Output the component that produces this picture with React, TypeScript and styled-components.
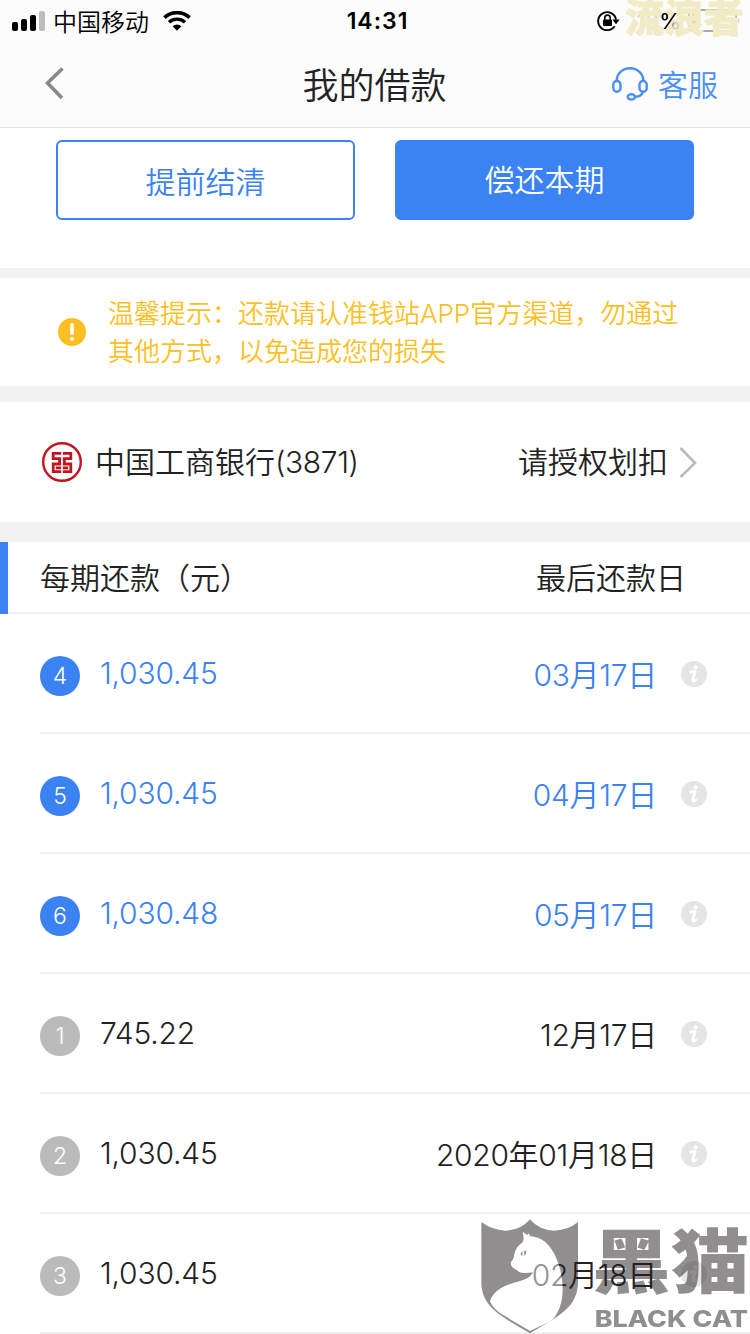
import styled, { createGlobalStyle } from "styled-components";

const GlobalStyle = createGlobalStyle`
    * {
        box-sizing: border-box;
    }

    body {
        margin: 0;
        background-color: #F2F2F2;
        color: #222222;
        font-family: Inter, "Noto Sans CJK SC", sans-serif;
        font-weight: 350;
    }
`;

const Page = styled.main`
    position: relative;
    width: 750px;
    height: 1334px;
    overflow: hidden;
`;

const TopBar = styled.header`
    height: 128px;
    background-color: #FCFCFC;
    border-bottom: 1px solid #E3E3E3;
`;

const StatusBar = styled.div`
    display: grid;
    grid-template-columns: 1fr auto 1fr;
    align-items: center;
    height: 40px;
    padding: 0 9px 0 12px;
    color: #000000;
`;

const StatusGroup = styled.div<{ $end?: boolean }>`
    display: flex;
    align-items: center;
    justify-content: ${({ $end }) => ($end ? "flex-end" : "flex-start")};
`;

const Carrier = styled.span`
    font-size: 24px;
    line-height: 37px;
    padding-top: 3px;
    margin: 0 14px 0 8px;
`;

const Clock = styled.span`
    font-size: 23px;
    line-height: 40px;
    font-weight: 600;
    letter-spacing: 1px;
    padding: 1px 0 0 2px;
`;

const Percent = styled.span`
    font-size: 22px;
    line-height: 40px;
    font-weight: 500;
    margin: 0 7px 0 16px;
`;

const Faded = styled.span`
    color: #D5D5D5;
`;

const PercentSign = styled.span`
    position: relative;
    z-index: 1;
    background-image: linear-gradient(115deg, #000000 58%, #CFCDBE 66%);
    background-clip: text;
    color: transparent;
`;

const NavBar = styled.nav`
    display: grid;
    grid-template-columns: 1fr auto 1fr;
    align-items: center;
    height: 87px;
    padding: 0 32px 0 44px;
`;

const Title = styled.h1`
    margin: 0;
    font-size: 36px;
    line-height: 52px;
    font-weight: 350;
    padding: 5px 13px 0 0;
`;

const Service = styled.a`
    display: flex;
    align-items: center;
    justify-content: flex-end;
    gap: 10px;
    color: #4A8FF7;
    font-size: 30px;
    line-height: 44px;
`;

const ServiceLabel = styled.span`
    padding-top: 2px;
`;

const Actions = styled.section`
    display: flex;
    gap: 40px;
    height: 140px;
    padding: 12px 56px 0;
    background-color: #FFFFFF;
`;

const Button = styled.button<{ $primary?: boolean }>`
    flex: 1;
    height: 80px;
    border: 2px solid #3B82F3;
    border-radius: 6px;
    padding: ${({ $primary }) => ($primary ? "0 0 4px" : "0")};
    background-color: ${({ $primary }) => ($primary ? "#3B82F3" : "#FFFFFF")};
    color: ${({ $primary }) => ($primary ? "#FFFFFF" : "#3B82F3")};
    font-family: inherit;
    font-size: 30px;
    font-weight: inherit;
`;

const Notice = styled.section`
    display: flex;
    align-items: center;
    gap: 22px;
    height: 108px;
    margin-top: 10px;
    padding-left: 58px;
    background-color: #FFFFFF;
    color: #FCBF23;
`;

const NoticeText = styled.p`
    margin: 0;
    padding-bottom: 3px;
    font-family: "Noto Sans CJK SC", sans-serif;
    font-size: 26px;
    line-height: 38px;
    white-space: nowrap;
`;

const Latin = styled.span`
    font-family: Inter, sans-serif;
    font-weight: 300;
    line-height: 1;
`;

const BankRow = styled.section`
    display: flex;
    align-items: center;
    height: 120px;
    margin-top: 16px;
    padding: 0 53px 0 41px;
    background-color: #FFFFFF;
    font-size: 30px;
    line-height: 44px;
`;

const BankName = styled.span`
    flex: 1;
    margin-left: 12px;
    padding-bottom: 1px;
`;

const CardNumber = styled.span`
    font-weight: 300;
    letter-spacing: -0.4px;
`;

const Authorize = styled.span`
    margin-right: 11px;
    padding-bottom: 1px;
`;

const TableHead = styled.header`
    display: flex;
    justify-content: space-between;
    align-items: center;
    height: 72px;
    margin-top: 20px;
    padding: 0 64px 4px 32px;
    border-left: 8px solid #3B82F3;
    background-color: #FFFFFF;
    box-shadow: inset 0 -2px 0 #F0F0F0;
    font-family: "Noto Sans CJK SC", sans-serif;
    font-size: 30px;
    line-height: 44px;
`;

const List = styled.ul`
    margin: 0;
    padding: 0 0 0 40px;
    list-style: none;
    background-color: #FFFFFF;
`;

const Row = styled.li<{ $active: boolean }>`
    display: flex;
    align-items: center;
    height: 120px;
    padding-right: 43px;
    border-bottom: 2px solid #F0F0F0;
    color: ${({ $active }) => ($active ? "#3B82F3" : "#222222")};
    font-size: 30px;
    line-height: 44px;

    svg {
        margin-top: 2px;
    }
`;

const Badge = styled.span<{ $active: boolean }>`
    width: 40px;
    height: 40px;
    margin-top: 6px;
    border-radius: 50%;
    background-color: ${({ $active }) => ($active ? "#3B82F3" : "#BBBBBB")};
    color: #FFFFFF;
    font-size: 23px;
    font-weight: 300;
    line-height: 40px;
    text-align: center;
`;

const Amount = styled.span`
    flex: 1;
    margin-left: 20px;
    font-weight: 300;
    letter-spacing: -0.2px;
`;

const DueDate = styled.span`
    margin: 3px 24px 0 0;
    font-weight: 330;
    letter-spacing: -0.3px;
`;

const NameMark = styled.div`
    position: absolute;
    top: -10px;
    left: 625px;
    font-size: 39.5px;
    line-height: 57px;
    font-weight: 900;
    color: #F1ECC6;
    -webkit-text-stroke: 0.8px #F1ECC6;
    white-space: nowrap;
`;

const CatMark = styled.svg`
    position: absolute;
    right: 0;
    bottom: 0;
    opacity: 0.5;
`;

const SignalIcon = () => (
    <svg width="33" height="20" viewBox="0 0 33 20">
        <rect x="0" y="11" width="6" height="9" rx="2" />
        <rect x="9" y="8" width="6" height="12" rx="2" />
        <rect x="18" y="4" width="6" height="16" rx="2" />
        <rect x="27" y="0" width="6" height="20" rx="2" fill="#BDBDBD" />
    </svg>
);

const WifiIcon = () => (
    <svg width="28" height="20" viewBox="0 0 28 20">
        <path d="M1.4 6.6a18.5 18.5 0 0 1 25.2 0" fill="none" stroke="#000" strokeWidth="3.6" />
        <path d="M6 11.2a12 12 0 0 1 16 0" fill="none" stroke="#000" strokeWidth="3.4" />
        <path d="M9.6 15.3a6.6 6.6 0 0 1 8.8 0L14 19.8z" />
    </svg>
);

const RotationLockIcon = () => (
    <svg width="23" height="22" viewBox="0 0 23 22">
        <path d="M17.6 16.2A9 9 0 1 1 19 9.5" fill="none" stroke="#000" strokeWidth="1.9" />
        <path d="M15.4 9.5h7.2l-3.6 4.8z" />
        <rect x="6" y="9.5" width="9" height="6.6" rx="1" />
        <path d="M7.8 10V7.8a2.7 2.7 0 0 1 5.4 0V10" fill="none" stroke="#000" strokeWidth="1.6" />
    </svg>
);

const BatteryIcon = () => (
    <svg width="53" height="24" viewBox="0 0 53 24">
        <rect x="1" y="1" width="47" height="21" rx="5" fill="none" stroke="#A8A8A8" strokeWidth="1.8" />
        <rect x="4" y="4" width="8" height="15" rx="2" fill="#FFB5B0" />
        <path d="M50 8q3 3.5 0 7z" fill="#DDDDDD" />
    </svg>
);

const BackIcon = () => (
    <svg width="22" height="34" viewBox="0 0 22 34">
        <path d="M18.5 1.5 3.5 16l14.5 15" fill="none" stroke="#888888" strokeWidth="3.6" />
    </svg>
);

const HeadsetIcon = () => (
    <svg width="36" height="34" viewBox="0 0 36 34" fill="none" stroke="#4A8FF7" strokeWidth="2.4">
        <path d="M4.7 14V13.5a13.3 12.3 0 0 1 26.6 0V14" />
        <rect x="1.3" y="14" width="7.2" height="10.8" rx="3.5" />
        <rect x="27.5" y="14" width="7.2" height="10.8" rx="3.5" />
        <path d="M31 24.8c-1 3-3.600 4.900-8 5" />
        <ellipse cx="19.3" cy="29.9" rx="3.6" ry="2.6" />
    </svg>
);

const WarnIcon = () => (
    <svg width="28" height="28" viewBox="0 0 28 28">
        <circle cx="14" cy="14" r="14" fill="#FCBF23" />
        <path d="M14 7v8" stroke="#FFF" strokeWidth="3.8" strokeLinecap="round" />
        <circle cx="14" cy="21" r="2" fill="#FFF" />
    </svg>
);

const BankIcon = () => (
    <svg width="42" height="42" viewBox="0 0 42 42" fill="none" stroke="#C2151F">
        <circle cx="21" cy="21" r="18.8" strokeWidth="2.4" />
        <g strokeWidth="2.8">
            <path d="M20.2 12.4h-8v5.2h8M20.2 23h-8v7.6h8" />
            <path d="M21.8 12.4h8v5.2h-8M21.8 23h8v7.6h-8" />
            <path d="M18.6 17v6M23.4 17v6M14.8 26.8h5.4M21.8 26.8h5.4" />
        </g>
    </svg>
);

const ArrowIcon = () => (
    <svg width="18" height="32" viewBox="0 0 18 32">
        <path d="M1.5 2 16 17 1.5 31" fill="none" stroke="#BBBBBB" strokeWidth="2.6" />
    </svg>
);

const InfoIcon = () => (
    <svg width="26" height="26" viewBox="0 0 26 26">
        <circle cx="13" cy="13" r="13" fill="#E5E5E5" />
        <circle cx="14.6" cy="6.3" r="2.1" fill="#FFF" />
        <path d="M8.8 11.6c2-.9 4-1.2 5.2-1l-2.3 8.4c-.2 1.2 1.5 1 4.2-.5" fill="none" stroke="#FFF" strokeWidth="2.8" />
    </svg>
);

const BlackCat = () => (
    <CatMark width="280" height="124" viewBox="0 0 840 372" fill="#231F20">
        <path d="M34 36Q66 60 107 62 152 61 180 28 208 61 253 62 295 60 324 36V214C324 292 270 316 180 370 90 316 34 292 34 214Z" />
        <g transform="translate(24 15)">
            <path
                d="M134 50 148 61 150 54 158 64C185 66 205 80 220 102 242 134 254 180 254 222 254 262 242 298 218 319L156 348 82 304C56 290 42 274 36 258 46 234 62 221 86 211 112 200 134 198 150 188 158 184 162 178 165 172 150 174 136 176 122 170 116 162 98 160 98 144 100 138 106 136 108 124 110 106 118 94 130 85 138 78 138 70 134 50Z"
                fill="#FFF"
            />
            <path d="M128 115l6-6-1 14q-5-1-5-8zM138 108l7-1q1 10-7 16 3-8 0-15z" />
        </g>
        <text x="366" y="234" fontSize="212" fontWeight="900" fontFamily="Noto Sans CJK SC" textLength="472" lengthAdjust="spacingAndGlyphs">黑猫</text>
        <text x="374" y="350" fontSize="68" fontWeight="800" fontFamily="Inter" textLength="460" lengthAdjust="spacingAndGlyphs">BLACK CAT</text>
    </CatMark>
);

interface IInstallment {
    period: number;
    amount: string;
    date: string;
    active: boolean;
}

const installments: IInstallment[] = [
    { period: 4, amount: "1,030.45", date: "03月17日", active: true },
    { period: 5, amount: "1,030.45", date: "04月17日", active: true },
    { period: 6, amount: "1,030.48", date: "05月17日", active: true },
    { period: 1, amount: "745.22", date: "12月17日", active: false },
    { period: 2, amount: "1,030.45", date: "2020年01月18日", active: false },
    { period: 3, amount: "1,030.45", date: "02月18日", active: false },
];

function Installment({ period, amount, date, active }: IInstallment) {
    return (
        <Row $active={active}>
            <Badge $active={active}>{period}</Badge>
            <Amount>{amount}</Amount>
            <DueDate>{date}</DueDate>
            <InfoIcon />
        </Row>
    );
}

function App() {
    return (
        <Page>
            <GlobalStyle />
            <TopBar>
                <StatusBar>
                    <StatusGroup>
                        <SignalIcon />
                        <Carrier>中国移动</Carrier>
                        <WifiIcon />
                    </StatusGroup>
                    <Clock>14:31</Clock>
                    <StatusGroup $end>
                        <RotationLockIcon />
                        <Percent><Faded>18</Faded><PercentSign>%</PercentSign></Percent>
                        <BatteryIcon />
                    </StatusGroup>
                </StatusBar>
                <NavBar>
                    <BackIcon />
                    <Title>我的借款</Title>
                    <Service>
                        <HeadsetIcon />
                        <ServiceLabel>客服</ServiceLabel>
                    </Service>
                </NavBar>
            </TopBar>
            <Actions>
                <Button>提前结清</Button>
                <Button $primary>偿还本期</Button>
            </Actions>
            <Notice>
                <WarnIcon />
                <NoticeText>
                    温馨提示：还款请认准钱站<Latin>APP</Latin>官方渠道，勿通过
                    <br />
                    其他方式，以免造成您的损失
                </NoticeText>
            </Notice>
            <BankRow>
                <BankIcon />
                <BankName>中国工商银行<CardNumber>(3871)</CardNumber></BankName>
                <Authorize>请授权划扣</Authorize>
                <ArrowIcon />
            </BankRow>
            <TableHead>
                <span>每期还款（元）</span>
                <span>最后还款日</span>
            </TableHead>
            <List>
                {installments.map((item) => (
                    <Installment key={item.period} {...item} />
                ))}
            </List>
            <NameMark>流浪者</NameMark>
            <BlackCat />
        </Page>
    );
}

export default App;
